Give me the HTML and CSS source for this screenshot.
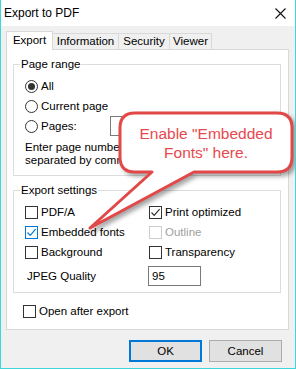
FILE: index.html
```html
<!DOCTYPE html>
<html lang="en">

<head>
    <meta charset="utf-8" />
    <title>Export to PDF</title>
    <link rel="stylesheet" href="styles.css">
</head>

<body>
    <div class="window">
        <div class="titlebar">
            <span class="title">Export to PDF</span>
            <svg class="close" width="11" height="11" viewBox="0 0 11 11">
                <path d="M0.5 0.5 L10.5 10.5 M10.5 0.5 L0.5 10.5" stroke="#111" stroke-width="1.1" fill="none" />
            </svg>
        </div>
        <div class="content">
            <div class="tabs">
                <div class="tab active">Export</div>
                <div class="tab info">Information</div>
                <div class="tab security">Security</div>
                <div class="tab viewer">Viewer</div>
            </div>
            <div class="panel">
                <fieldset class="group range">
                    <legend>Page range</legend>
                    <div class="row"><span class="radio on"></span>All</div>
                    <div class="row"><span class="radio"></span>Current page</div>
                    <div class="row"><span class="radio"></span>Pages:<span class="field pages"></span></div>
                    <p class="hint">Enter page numbers<br>separated by commas</p>
                </fieldset>
                <fieldset class="group settings">
                    <legend>Export settings</legend>
                    <div class="grid">
                        <div class="row"><span class="check"></span>PDF/A</div>
                        <div class="row"><span class="check"><svg viewBox="0 0 11 11"><path d="M1.5 5.5 L4.2 8.3 L9.6 2.2" /></svg></span>Print optimized</div>
                        <div class="row"><span class="check focus"><svg viewBox="0 0 11 11"><path d="M1.5 5.5 L4.2 8.3 L9.6 2.2" /></svg></span>Embedded fonts</div>
                        <div class="row disabled"><span class="check"></span>Outline</div>
                        <div class="row"><span class="check"></span>Background</div>
                        <div class="row"><span class="check"></span>Transparency</div>
                    </div>
                    <div class="jpeg">
                        <span class="jpeg-label">JPEG Quality</span>
                        <span class="field quality">95</span>
                    </div>
                </fieldset>
                <div class="row open"><span class="check"></span>Open after export</div>
            </div>
            <div class="buttons">
                <button class="btn default">OK</button>
                <button class="btn">Cancel</button>
            </div>
        </div>

        <!-- callout drawn over the dialog -->
        <svg class="callout" width="296" height="369" viewBox="0 0 296 369">
            <path d="M135 113 H277 Q292 113 292 128 V157 Q292 172 277 172 H194 L90 228 L152 172 H135 Q120 172 120 157 V128 Q120 113 135 113 Z"
                fill="#fff" stroke="#e24848" stroke-width="3" stroke-linejoin="round" />
        </svg>
        <div class="callout-text">Enable "Embedded<br>Fonts" here.</div>
    </div>
</body>

</html>
```

FILE: styles.css
```css
body {
    margin: 0;
    font-family: "Liberation Sans", Arial, sans-serif;
    font-size: 11.5px;
    color: #000;
}

.window {
    position: relative;
    width: 296px;
    height: 369px;
    box-sizing: border-box;
    border: 1px solid #3dd6da;
    border-top: none;
    background: #f0f0f0;
    overflow: hidden;
}

.titlebar {
    height: 26px;
    background: #fff;
    display: flex;
    align-items: center;
    justify-content: space-between;
    padding: 0 9px 0 3px;
    font-size: 12px;
}

.close {
    display: block;
    margin-top: 1px;
}

.content {
    padding: 5px 0 0 5px;
}

.tabs {
    display: flex;
    align-items: flex-end;
    height: 18px;
}

.tab {
    box-sizing: border-box;
    height: 16px;
    border: 1px solid #d9d9d9;
    border-bottom: none;
    background: #f0f0f0;
    margin-left: -1px;
    text-align: center;
    line-height: 15px;
}

.tab.active {
    position: relative;
    z-index: 1;
    margin-left: 0;
    height: 19px;
    margin-bottom: -1px;
    width: 47px;
    background: #fff;
    line-height: 17px;
}

.info {
    width: 67px;
}

.security {
    width: 52px;
}

.viewer {
    width: 43px;
}

.panel {
    box-sizing: border-box;
    width: 283px;
    height: 281px;
    border: 1px solid #d9d9d9;
    background: #fff;
    padding: 0 0 0 6px;
}

.group {
    box-sizing: border-box;
    width: 268px;
    margin: 0;
    border: 1px solid #dcdcdc;
    padding: 5px 0 0 11px;
}

.group legend {
    padding: 0 1px;
    margin-left: -5px;
    line-height: 14px;
}

.range {
    margin-top: 7px;
    padding-bottom: 8px;
}

.settings {
    margin-top: 7px;
    padding-bottom: 6px;
}

.row {
    display: flex;
    align-items: center;
    height: 20px;
    white-space: nowrap;
}

.radio {
    box-sizing: border-box;
    width: 13px;
    height: 13px;
    border: 1px solid #333;
    border-radius: 50%;
    margin-right: 3px;
    display: flex;
    align-items: center;
    justify-content: center;
}

.radio.on::after {
    content: "";
    width: 7px;
    height: 7px;
    border-radius: 50%;
    background: #333;
}

.field {
    box-sizing: border-box;
    display: block;
    height: 20px;
    border: 1px solid #7a7a7a;
    background: #fff;
}

.pages {
    margin-left: 33px;
    width: 100px;
}

.hint {
    margin: 5px 0 0;
    line-height: 13px;
    white-space: nowrap;
}

.grid {
    display: grid;
    grid-template-columns: 124px 1fr;
}

.check {
    box-sizing: border-box;
    width: 13px;
    height: 13px;
    border: 1px solid #333;
    background: #fff;
    margin-right: 3px;
}

.check svg {
    display: block;
    width: 11px;
    height: 11px;
    fill: none;
    stroke: #333;
    stroke-width: 1.2;
}

.check.focus {
    border-color: #0078d7;
}

.check.focus svg {
    stroke: #0078d7;
}

.disabled {
    color: #a0a0a0;
}

.disabled .check {
    border-color: #ccc;
}

.jpeg {
    display: flex;
    align-items: center;
    margin-top: 4px;
}

.jpeg-label {
    width: 121px;
    margin-left: 2px;
}

.quality {
    width: 53px;
    padding-left: 3px;
    line-height: 18px;
}

.open {
    margin: 8px 0 0 10px;
}

.buttons {
    display: flex;
    justify-content: flex-end;
    gap: 7px;
    padding: 10px 13px 0 0;
}

.btn {
    box-sizing: border-box;
    width: 73px;
    height: 22px;
    margin: 0;
    padding: 0;
    border: 1px solid #adadad;
    background: #e1e1e1;
    font-family: inherit;
    font-size: 11.5px;
    color: #000;
}

.btn.default {
    border: 2px solid #0078d7;
}

.callout {
    position: absolute;
    top: 0;
    left: -1px;
    filter: drop-shadow(3px 3px 2px rgba(0, 0, 0, 0.35));
}

.callout-text {
    position: absolute;
    top: 124px;
    left: 119px;
    width: 172px;
    text-align: center;
    font-size: 15.5px;
    line-height: 19px;
    color: #e8484e;
}
```
